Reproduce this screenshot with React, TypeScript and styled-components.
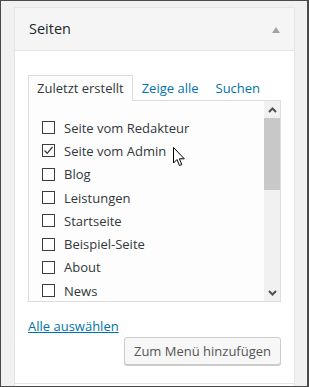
import { FC } from 'react'
import styled, { createGlobalStyle } from 'styled-components'

const pages = [
  { title: 'Seite vom Redakteur', checked: false },
  { title: 'Seite vom Admin', checked: true },
  { title: 'Blog', checked: false },
  { title: 'Leistungen', checked: false },
  { title: 'Startseite', checked: false },
  { title: 'Beispiel-Seite', checked: false },
  { title: 'About', checked: false },
  { title: 'News', checked: false }
]

const App: FC = () => {
  return (
    <Frame>
      <GlobalStyle />
      <Panel>
        <PanelHeader>
          <PanelTitle>Seiten</PanelTitle>
          <Toggle />
        </PanelHeader>
        <PanelBody>
          <Tabs>
            <Tab className="active">Zuletzt erstellt</Tab>
            <Tab>Zeige alle</Tab>
            <Tab>Suchen</Tab>
          </Tabs>
          <ListBox>
            <Items>
              {pages.map((page) => (
                <Item key={page.title}>
                  <Checkbox>
                    {page.checked && (
                      <svg width="11" height="11" viewBox="0 0 11 11">
                        <path d="M1.5 5.5 L4.2 8.3 L9.5 2" fill="none" stroke="#3c3c3c" strokeWidth="1.3" />
                      </svg>
                    )}
                  </Checkbox>
                  <ItemLabel>{page.title}</ItemLabel>
                </Item>
              ))}
            </Items>
            <Scrollbar>
              <ScrollArrow>
                <svg width="9" height="6" viewBox="0 0 9 6">
                  <path d="M1 5 L4.5 1.5 L8 5" fill="none" stroke="#505050" strokeWidth="2" />
                </svg>
              </ScrollArrow>
              <ScrollThumb />
              <ScrollTrack />
              <ScrollArrow>
                <svg width="9" height="6" viewBox="0 0 9 6">
                  <path d="M1 1 L4.5 4.5 L8 1" fill="none" stroke="#505050" strokeWidth="2" />
                </svg>
              </ScrollArrow>
            </Scrollbar>
          </ListBox>
          <SelectAll>Alle auswählen</SelectAll>
          <ButtonRow>
            <Button>Zum Menü hinzufügen</Button>
          </ButtonRow>
        </PanelBody>
        <PanelFooter />
      </Panel>
      <Cursor width="13" height="20" viewBox="0 0 13 20">
        <path d="M0.5 0.5 L0.5 16 L4 12.5 L6.5 18.5 L8.8 17.5 L6.4 11.8 L11.3 11.8 Z" fill="#fff" stroke="#000" strokeWidth="1" strokeLinejoin="round" />
      </Cursor>
    </Frame>
  )
}

const GlobalStyle = createGlobalStyle`
  * {
    box-sizing: border-box;
  }
  html, body {
    margin: 0;
    padding: 0;
    background: #f1f1f1;
  }
  body {
    font-family: 'Open Sans', 'Liberation Sans', sans-serif;
    font-size: 13px;
  }
`

const Frame = styled.div`
  position: relative;
  width: 309px;
  height: 387px;
  overflow: hidden;
  background: #f1f1f1;
  border: 1px solid #4a4a4a;
  border-right-width: 2px;
  padding: 6px 12px 0 13px;
`

const Panel = styled.div`
  display: flex;
  flex-direction: column;
  width: 281px;
  background: #fff;
  border: 1px solid #e5e5e5;
  border-bottom: none;
`

const PanelHeader = styled.div`
  display: flex;
  align-items: center;
  justify-content: space-between;
  height: 43px;
  padding: 0 14px 0 14px;
  background: #f5f5f5;
  border-bottom: 1px solid #e5e5e5;
`

const PanelTitle = styled.div`
  font-size: 14.5px;
  color: #23282d;
  line-height: 20px;
`

const Toggle = styled.div`
  width: 0;
  height: 0;
  margin-top: 1px;
  border-left: 4.5px solid transparent;
  border-right: 4.5px solid transparent;
  border-bottom: 6px solid #a0a5aa;
`

const PanelBody = styled.div`
  display: flex;
  flex-direction: column;
  padding: 24px 13px 18px 13px;
`

const Tabs = styled.div`
  display: flex;
  align-items: flex-end;
  height: 25px;
`

const Tab = styled.div`
  padding: 0 8px;
  margin-left: 1px;
  line-height: 24px;
  color: #0073aa;
  &.active {
    position: relative;
    z-index: 1;
    height: 26px;
    margin: 0 0 -1px 0;
    padding: 0 8px;
    color: #32373c;
    background: #fdfdfd;
    border: 1px solid #dddddd;
    border-bottom: none;
  }
`

const ListBox = styled.div`
  display: flex;
  height: 202px;
  background: #fdfdfd;
  border: 1px solid #dddddd;
`

const Items = styled.div`
  flex: 1;
  overflow: hidden;
  padding: 15px 0 0 13px;
`

const Item = styled.div`
  display: flex;
  align-items: center;
  height: 23.3px;
`

const Checkbox = styled.div`
  display: flex;
  align-items: center;
  justify-content: center;
  width: 13px;
  height: 13px;
  border: 1px solid #3c3c3c;
  background: #fff;
`

const ItemLabel = styled.span`
  margin-left: 9px;
  color: #32373c;
  line-height: 20px;
`

const Scrollbar = styled.div`
  display: flex;
  flex-direction: column;
  width: 16px;
  background: #f1f1f1;
`

const ScrollArrow = styled.div`
  display: flex;
  align-items: center;
  justify-content: center;
  height: 17px;
`

const ScrollThumb = styled.div`
  height: 72px;
  background: #c8c8c8;
`

const ScrollTrack = styled.div`
  flex: 1;
`

const SelectAll = styled.a`
  align-self: flex-start;
  margin-top: 14px;
  line-height: 20px;
  color: #0073aa;
  text-decoration: underline;
  cursor: pointer;
`

const ButtonRow = styled.div`
  display: flex;
  justify-content: flex-end;
  margin-top: 1px;
`

const Button = styled.button`
  width: 157px;
  height: 28px;
  padding: 0;
  font-family: inherit;
  font-size: 13px;
  color: #555;
  background: #f7f7f7;
  border: 1px solid #cccccc;
  border-radius: 3px;
  box-shadow: 0 1px 0 #cccccc;
`

const PanelFooter = styled.div`
  height: 3px;
  border-top: 1px solid #e5e5e5;
`

const Cursor = styled.svg`
  position: absolute;
  left: 172px;
  top: 146px;
`

export default App
